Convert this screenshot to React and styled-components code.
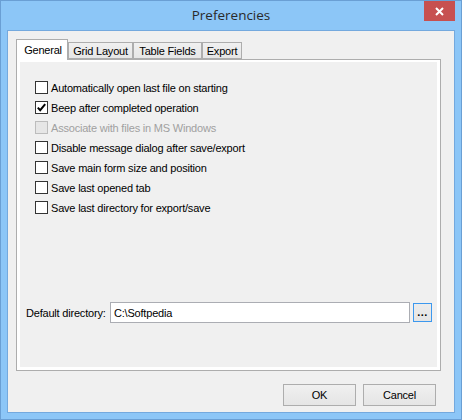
import React from "react";
import styled, { createGlobalStyle } from "styled-components";

const Global = createGlobalStyle`
  html, body { margin: 0; padding: 0; background: #8cc6f7; overflow: hidden; }
  #root { width: 462px; height: 420px; }
`;

const Window = styled.div`
  box-sizing: border-box;
  width: 462px;
  height: 420px;
  border: 1px solid #6a9fd4;
  background: #8cc6f7;
  display: flex;
  flex-direction: column;
  padding: 0 6px 6px 6px;
`;

const TitleBar = styled.div`
  height: 29px;
  display: grid;
  grid-template-columns: 1fr auto 1fr;
  align-items: start;
`;

const Title = styled.div`
  grid-column: 2;
  font-family: "Open Sans", "Noto Sans", sans-serif;
  font-size: 13.5px;
  line-height: 29px;
  color: #2a2a2a;
`;

const CloseButton = styled.div`
  grid-column: 3;
  justify-self: end;
  width: 31px;
  height: 20px;
  background: #c75050;
  display: flex;
  align-items: center;
  justify-content: center;
`;

const Client = styled.div`
  flex: 1;
  box-sizing: border-box;
  border: 1px solid #74a9de;
  background: #f0f0f0;
  display: flex;
  flex-direction: column;
  padding: 8px 13px 0 8px;
  font-family: "Liberation Sans", Arial, sans-serif;
  font-size: 11px;
  letter-spacing: -0.2px;
  color: #000;
`;

const TabRow = styled.div`
  display: flex;
  align-items: flex-end;
  height: 21px;
  margin-bottom: -1px;
  position: relative;
  z-index: 1;
`;

const Tab = styled.div`
  box-sizing: border-box;
  width: ${(p) => p.$w}px;
  height: ${(p) => (p.$active ? 21 : 17)}px;
  margin-bottom: ${(p) => (p.$active ? 0 : 1)}px;
  border: 1px solid #adadad;
  border-bottom: ${(p) => (p.$active ? "none" : "1px solid #adadad")};
  background: ${(p) => (p.$active ? "#ffffff" : "linear-gradient(#f0f0f0, #e6e6e6)")};
  display: flex;
  align-items: center;
  justify-content: center;
  padding-top: ${(p) => (p.$active ? 0 : 1)}px;
  padding-left: ${(p) => (p.$active ? 2 : 0)}px;
  white-space: nowrap;
`;

const TabPanel = styled.div`
  box-sizing: border-box;
  height: 312px;
  border: 1px solid #adadad;
  background: #ffffff;
  padding: 2px 3px 3px 3px;
  display: flex;
`;

const PanelInner = styled.div`
  flex: 1;
  background: #f0f0f0;
  display: flex;
  flex-direction: column;
  justify-content: space-between;
  padding: 19px 0 44px 6px;
`;

const CheckList = styled.div`
  display: flex;
  flex-direction: column;
  gap: 7px;
  padding-left: 9px;
`;

const CheckRow = styled.label`
  display: flex;
  align-items: center;
  height: 13px;
  gap: 3px;
  color: ${(p) => (p.$disabled ? "#a0a0a0" : "#000")};
  white-space: nowrap;
`;

const Box = styled.span`
  box-sizing: border-box;
  width: 13px;
  height: 13px;
  border: 1px solid ${(p) => (p.$disabled ? "#bcbcbc" : "#333333")};
  background: ${(p) => (p.$disabled ? "#e6e6e6" : "#ffffff")};
  display: flex;
  align-items: center;
  justify-content: center;
  flex: none;
`;

const DirRow = styled.div`
  display: flex;
  align-items: center;
  height: 21px;
`;

const DirLabel = styled.span`
  width: 84px;
  white-space: nowrap;
`;

const TextInput = styled.div`
  box-sizing: border-box;
  width: 300px;
  height: 21px;
  border: 1px solid #abadb3;
  background: #fff;
  display: flex;
  align-items: center;
  padding-left: 3px;
`;

const BrowseButton = styled.div`
  box-sizing: border-box;
  width: 19px;
  height: 19px;
  margin-left: 3px;
  border: 1px solid #3c98ee;
  background: linear-gradient(#ececec, #e4e4e4);
  display: flex;
  align-items: center;
  justify-content: center;
  font-weight: bold;
  letter-spacing: 0.5px;
  padding-bottom: 2px;
`;

const ButtonBar = styled.div`
  display: flex;
  justify-content: flex-end;
  gap: 7px;
  padding: 13px 5px 0 0;
`;

const Button = styled.div`
  box-sizing: border-box;
  width: 73px;
  height: 22px;
  border: 1px solid #adadad;
  background: linear-gradient(#f0f0f0, #e5e5e5);
  display: flex;
  align-items: center;
  justify-content: center;
`;

const Check = () => (
  <svg width="11" height="11" viewBox="0 0 11 11">
    <path d="M1.8 5.6 L4.2 8.2 L9.2 2.2" fill="none" stroke="#000" strokeWidth="2" />
  </svg>
);

const options = [
  { text: "Automatically open last file on starting" },
  { text: "Beep after completed operation", checked: true },
  { text: "Associate with files in MS Windows", disabled: true },
  { text: "Disable message dialog after save/export" },
  { text: "Save main form size and position" },
  { text: "Save last opened tab" },
  { text: "Save last directory for export/save" },
];

const tabs = [
  { label: "General", w: 52, active: true },
  { label: "Grid Layout", w: 65 },
  { label: "Table Fields", w: 69 },
  { label: "Export", w: 40 },
];

export default function App() {
  return (
    <>
      <Global />
      <Window>
        <TitleBar>
          <Title>Preferencies</Title>
          <CloseButton>
            <svg width="9" height="9" viewBox="0 0 9 9">
              <path d="M1 1 L8 8 M8 1 L1 8" stroke="#fff" strokeWidth="2" />
            </svg>
          </CloseButton>
        </TitleBar>
        <Client>
          <TabRow>
            {tabs.map((t) => (
              <Tab key={t.label} $w={t.w} $active={t.active}>
                {t.label}
              </Tab>
            ))}
          </TabRow>
          <TabPanel>
            <PanelInner>
              <CheckList>
                {options.map((o) => (
                  <CheckRow key={o.text} $disabled={o.disabled}>
                    <Box $disabled={o.disabled}>{o.checked && <Check />}</Box>
                    {o.text}
                  </CheckRow>
                ))}
              </CheckList>
              <DirRow>
                <DirLabel>Default directory:</DirLabel>
                <TextInput>C:\Softpedia</TextInput>
                <BrowseButton>...</BrowseButton>
              </DirRow>
            </PanelInner>
          </TabPanel>
          <ButtonBar>
            <Button>OK</Button>
            <Button>Cancel</Button>
          </ButtonBar>
        </Client>
      </Window>
    </>
  );
}
